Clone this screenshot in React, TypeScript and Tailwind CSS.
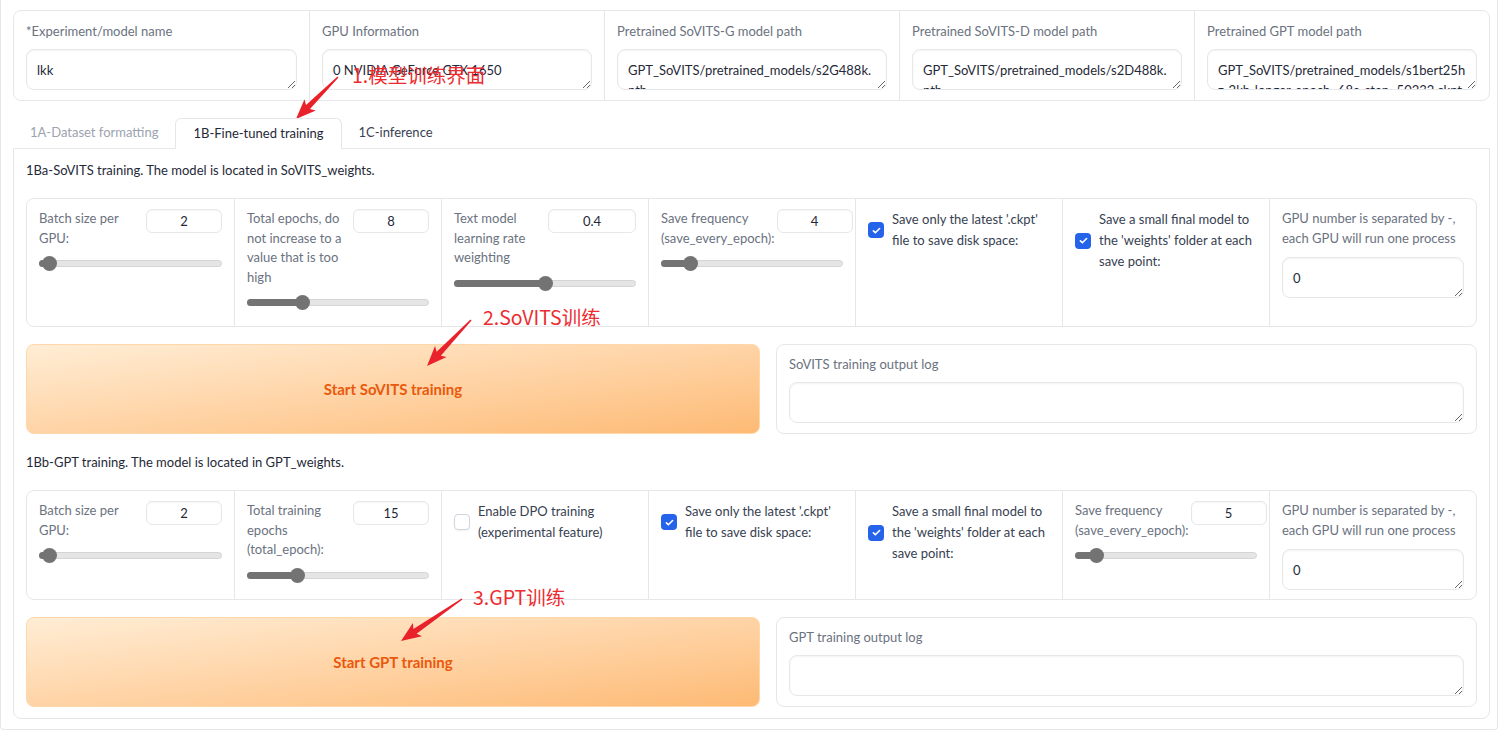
import React from "react";

type Pt = [number, number];

function arrowPoints(tx: number, ty: number, px: number, py: number): string {
  const dx = px - tx;
  const dy = py - ty;
  const len = Math.hypot(dx, dy);
  const ux = dx / len;
  const uy = dy / len;
  const nx = -uy;
  const ny = ux;
  const L = 17;
  const W = 8;
  const s0 = 0.7;
  const s1 = 2.8;
  const bx = px - ux * L;
  const by = py - uy * L;
  const bbx = px - ux * (L + 3);
  const bby = py - uy * (L + 3);
  const pts: Pt[] = [
    [tx + nx * s0, ty + ny * s0],
    [bx + nx * s1, by + ny * s1],
    [bbx + nx * W, bby + ny * W],
    [px, py],
    [bbx - nx * W, bby - ny * W],
    [bx - nx * s1, by - ny * s1],
    [tx - nx * s0, ty - ny * s0],
  ];
  return pts.map((p) => `${p[0].toFixed(1)},${p[1].toFixed(1)}`).join(" ");
}

const Slider = ({ f }: { f: number }) => (
  <div className="relative h-[15px] w-full">
    <div className="absolute left-0 right-0 top-[4px] h-[7px] rounded-full border border-[#d4d4d4] bg-[#e5e5e5]" />
    <div
      className="absolute left-0 top-[4px] h-[7px] rounded-l-full bg-[#737373]"
      style={{ width: `calc(7.5px + ${f} * (100% - 15px))` }}
    />
    <div
      className="absolute top-0 h-[15px] w-[15px] rounded-full bg-[#737373]"
      style={{ left: `calc(${f} * (100% - 15px))` }}
    />
  </div>
);

const Num = ({ v, wide }: { v: string; wide?: boolean }) => (
  <div
    className={
      (wide ? "w-[88px] " : "w-[76px] ") +
      "h-[24px] shrink-0 rounded-md border border-[#e5e7eb] bg-white text-center text-[13px] leading-[22px] text-[#1f2937] shadow-[inset_0_1px_2px_rgba(0,0,0,0.04)]"
    }
  >
    {v}
  </div>
);

const Area = ({ v }: { v: string }) => (
  <textarea
    readOnly
    defaultValue={v}
    className="block h-[41px] w-full resize-y overflow-hidden rounded-lg border border-[#e5e7eb] bg-white px-[10px] py-[10px] text-[13px] leading-[20px] text-[#1f2937] shadow-[inset_0_1px_2px_rgba(0,0,0,0.05)] outline-none"
  />
);

const Check = ({ on }: { on: boolean }) =>
  on ? (
    <div className="flex h-[16px] w-[16px] shrink-0 items-center justify-center rounded-[4px] bg-[#2563eb]">
      <svg viewBox="0 0 16 16" className="h-[13px] w-[13px]">
        <path
          d="M4.2 8.4l2.4 2.4L11.8 5.6"
          fill="none"
          stroke="white"
          strokeWidth="2"
          strokeLinecap="round"
          strokeLinejoin="round"
        />
      </svg>
    </div>
  ) : (
    <div className="h-[16px] w-[16px] shrink-0 rounded-[4px] border border-[#d1d5db] bg-white shadow-[0_1px_2px_rgba(0,0,0,0.06)]" />
  );

const SliderCol = ({
  lines,
  v,
  f,
  wide,
  first,
}: {
  lines: string[];
  v: string;
  f: number;
  wide?: boolean;
  first?: boolean;
}) => (
  <div
    className={
      (first ? "" : "border-l border-[#e5e7eb] ") +
      "flex min-w-0 flex-col px-[12px] pt-[10px]"
    }
  >
    <div className="flex items-start justify-between gap-[2px]">
      <div className="whitespace-nowrap text-[13px] leading-[19.5px] text-[#6b7280]">
        {lines.map((l, i) => (
          <div key={i}>{l}</div>
        ))}
      </div>
      <Num v={v} wide={wide} />
    </div>
    <div className="mt-[8px]">
      <Slider f={f} />
    </div>
  </div>
);

const CheckCol = ({ lines, on }: { lines: string[]; on: boolean }) => (
  <div className="border-l border-[#e5e7eb] px-[12px] pt-[10px]">
    <div className="flex items-center gap-[8px]">
      <Check on={on} />
      <div className="whitespace-nowrap text-[13px] leading-[21px] text-[#374151]">
        {lines.map((l, i) => (
          <div key={i}>{l}</div>
        ))}
      </div>
    </div>
  </div>
);

const GpuCol = () => (
  <div className="border-l border-[#e5e7eb] px-[12px] pt-[10px]">
    <div className="whitespace-nowrap text-[13px] leading-[19.5px] text-[#6b7280]">
      <div>GPU number is separated by -,</div>
      <div>each GPU will run one process</div>
    </div>
    <div className="mt-[9px]">
      <Area v="0" />
    </div>
  </div>
);

const ActionRow = ({ btn, log }: { btn: string; log: string }) => (
  <div className="flex gap-[16px]">
    <div className="flex h-[90px] w-[734px] shrink-0 items-center justify-center rounded-lg border border-[#fed7aa] bg-linear-to-br from-[#ffedd5] to-[#fdba74] text-[15px] font-bold text-[#ea580c]">
      {btn}
    </div>
    <div className="flex-1 rounded-lg border border-[#e5e7eb] bg-white px-[12px] pb-[10px] pt-[9px]">
      <div className="text-[13px] leading-[20px] text-[#6b7280]">{log}</div>
      <div className="mt-[8px]">
        <Area v="" />
      </div>
    </div>
  </div>
);

const TopCol = ({ label, v, first }: { label: string; v: string; first?: boolean }) => (
  <div
    className={
      (first ? "" : "border-l border-[#e5e7eb] ") + "min-w-0 px-[12px] pb-[10px] pt-[10px]"
    }
  >
    <div className="text-[13px] leading-[20px] text-[#6b7280]">{label}</div>
    <div className="mt-[8px]">
      <Area v={v} />
    </div>
  </div>
);

export default function App() {
  return (
    <div className="relative h-[730px] w-[1504px] overflow-hidden bg-white font-['Lato','Noto_Sans',sans-serif]">
      <div className="h-[730px] w-[1498px] rounded-b-[4px] border-x border-b border-[#e5e7eb] pl-[12px] pr-[7px] pt-[10px]">
        {/* top card */}
        <div className="grid grid-cols-5 rounded-lg border border-[#e5e7eb] bg-white">
          <TopCol first label="*Experiment/model name" v="lkk" />
          <TopCol label="GPU Information" v="0 NVIDIA GeForce GTX 1650" />
          <TopCol
            label="Pretrained SoVITS-G model path"
            v="GPT_SoVITS/pretrained_models/s2G488k.pth"
          />
          <TopCol
            label="Pretrained SoVITS-D model path"
            v="GPT_SoVITS/pretrained_models/s2D488k.pth"
          />
          <TopCol
            label="Pretrained GPT model path"
            v="GPT_SoVITS/pretrained_models/s1bert25hz-2kh-longer-epoch=68e-step=50232.ckpt"
          />
        </div>

        {/* tabs */}
        <div className="mt-[17px] flex h-[30px] text-[13px]">
          <div className="px-[17px] leading-[29px] text-[#9ca3af]">1A-Dataset formatting</div>
          <div className="relative z-10 -mb-px rounded-t-md border-x border-t border-[#e5e7eb] bg-white px-[17px] leading-[28px] text-[#1f2937]">
            1B-Fine-tuned training
          </div>
          <div className="px-[17px] leading-[29px] text-[#374151]">1C-inference</div>
        </div>

        {/* panel */}
        <div className="h-[571px] rounded-b-lg border border-[#e5e7eb] bg-white px-[12px] pt-[11px]">
          <div className="text-[13px] leading-[20px] text-[#1f2937]">
            1Ba-SoVITS training. The model is located in SoVITS_weights.
          </div>
          <div className="mt-[18px] grid h-[129px] grid-cols-7 rounded-lg border border-[#e5e7eb] bg-white">
            <SliderCol first lines={["Batch size per", "GPU:"]} v="2" f={0.018} />
            <SliderCol
              lines={["Total epochs, do", "not increase to a", "value that is too", "high"]}
              v="8"
              f={0.29}
            />
            <SliderCol
              lines={["Text model", "learning rate", "weighting"]}
              v="0.4"
              f={0.5}
              wide
            />
            <SliderCol lines={["Save frequency", "(save_every_epoch):"]} v="4" f={0.13} />
            <CheckCol on lines={["Save only the latest '.ckpt'", "file to save disk space:"]} />
            <CheckCol
              on
              lines={["Save a small final model to", "the 'weights' folder at each", "save point:"]}
            />
            <GpuCol />
          </div>
          <div className="mt-[17px]">
            <ActionRow btn="Start SoVITS training" log="SoVITS training output log" />
          </div>

          <div className="mt-[18px] text-[13px] leading-[20px] text-[#1f2937]">
            1Bb-GPT training. The model is located in GPT_weights.
          </div>
          <div className="mt-[18px] grid h-[110px] grid-cols-7 rounded-lg border border-[#e5e7eb] bg-white">
            <SliderCol first lines={["Batch size per", "GPU:"]} v="2" f={0.018} />
            <SliderCol
              lines={["Total training", "epochs", "(total_epoch):"]}
              v="15"
              f={0.26}
            />
            <CheckCol on={false} lines={["Enable DPO training", "(experimental feature)"]} />
            <CheckCol on lines={["Save only the latest '.ckpt'", "file to save disk space:"]} />
            <CheckCol
              on
              lines={["Save a small final model to", "the 'weights' folder at each", "save point:"]}
            />
            <SliderCol lines={["Save frequency", "(save_every_epoch):"]} v="5" f={0.084} />
            <GpuCol />
          </div>
          <div className="mt-[17px]">
            <ActionRow btn="Start GPT training" log="GPT training output log" />
          </div>
        </div>
      </div>

      {/* annotations */}
      <svg
        className="pointer-events-none absolute left-0 top-0"
        width="1504"
        height="730"
        viewBox="0 0 1504 730"
      >
        <polygon points={arrowPoints(338, 77, 296, 119)} fill="#e8212a" />
        <polygon points={arrowPoints(471, 320, 427, 366)} fill="#e8212a" />
        <polygon points={arrowPoints(462, 599, 401, 641)} fill="#e8212a" />
      </svg>
      <div className="pointer-events-none absolute left-[352px] top-[62px] whitespace-nowrap font-['Noto_Sans_CJK_SC',sans-serif] text-[19.5px] leading-[26px] text-[#ec2c30]">
        1.模型训练界面
      </div>
      <div className="pointer-events-none absolute left-[483px] top-[304px] whitespace-nowrap font-['Noto_Sans_CJK_SC',sans-serif] text-[19.5px] leading-[26px] text-[#ec2c30]">
        2.SoVITS训练
      </div>
      <div className="pointer-events-none absolute left-[473px] top-[584px] whitespace-nowrap font-['Noto_Sans_CJK_SC',sans-serif] text-[19.5px] leading-[26px] text-[#ec2c30]">
        3.GPT训练
      </div>
    </div>
  );
}
